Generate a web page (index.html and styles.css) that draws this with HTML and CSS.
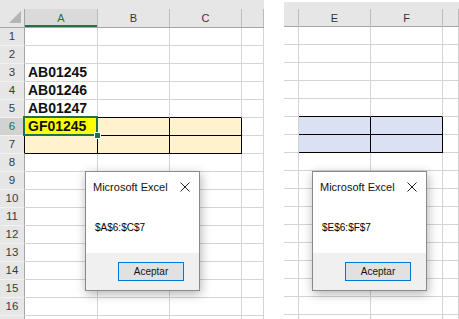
FILE: index.html
```html
<!DOCTYPE html>
<html lang="es">
<head>
    <meta charset="UTF-8">
    <title>Rango seleccionado</title>
    <link rel="stylesheet" href="styles.css">
</head>
<body>
    <div class="sheet sheet-left">
        <div class="row head">
            <span class="corner">
                <svg width="24" height="18" viewBox="0 0 24 18"><polygon points="21,4 21,16 9,16" fill="#b4b4b4"/></svg>
            </span>
            <span class="col-sel">A</span><span>B</span><span>C</span><span></span>
        </div>
        <div class="row"><span class="rh">1</span><span></span><span></span><span></span><span></span></div>
        <div class="row"><span class="rh">2</span><span></span><span></span><span></span><span></span></div>
        <div class="row"><span class="rh">3</span><span class="val">AB01245</span><span></span><span></span><span></span></div>
        <div class="row"><span class="rh">4</span><span class="val">AB01246</span><span></span><span></span><span></span></div>
        <div class="row"><span class="rh">5</span><span class="val above">AB01247</span><span class="above"></span><span class="above"></span><span></span></div>
        <div class="row"><span class="rh rh-sel boxed-left">6</span><span class="val cell-yellow active">GF01245</span><span class="peach"></span><span class="peach"></span><span></span></div>
        <div class="row"><span class="rh boxed-left">7</span><span class="peach"></span><span class="peach"></span><span class="peach"></span><span></span></div>
        <div class="row"><span class="rh">8</span><span></span><span></span><span></span><span></span></div>
        <div class="row"><span class="rh">9</span><span></span><span></span><span></span><span></span></div>
        <div class="row"><span class="rh">10</span><span></span><span></span><span></span><span></span></div>
        <div class="row"><span class="rh">11</span><span></span><span></span><span></span><span></span></div>
        <div class="row"><span class="rh">12</span><span></span><span></span><span></span><span></span></div>
        <div class="row"><span class="rh">13</span><span></span><span></span><span></span><span></span></div>
        <div class="row"><span class="rh">14</span><span></span><span></span><span></span><span></span></div>
        <div class="row"><span class="rh">15</span><span></span><span></span><span></span><span></span></div>
        <div class="row"><span class="rh">16</span><span></span><span></span><span></span><span></span></div>
        <div class="row"><span class="rh"></span><span></span><span></span><span></span><span></span></div>

        <div class="msgbox">
            <div class="msg-title">
                <span>Microsoft Excel</span>
                <svg width="10" height="10" viewBox="0 0 10 10"><path d="M0.5 0.5 L9.5 9.5 M9.5 0.5 L0.5 9.5" stroke="#222" stroke-width="1"/></svg>
            </div>
            <div class="msg-body">$A$6:$C$7</div>
            <div class="msg-foot"><button>Aceptar</button></div>
        </div>
    </div>

    <div class="sheet sheet-right">
        <div class="row head">
            <span></span><span>E</span><span>F</span><span></span>
        </div>
        <div class="row"><span class="rh"></span><span></span><span></span><span></span></div>
        <div class="row"><span class="rh"></span><span></span><span></span><span></span></div>
        <div class="row"><span class="rh"></span><span></span><span></span><span></span></div>
        <div class="row"><span class="rh"></span><span></span><span></span><span></span></div>
        <div class="row"><span class="rh"></span><span class="above"></span><span class="above"></span><span></span></div>
        <div class="row"><span class="rh boxed-left"></span><span class="blue"></span><span class="blue"></span><span></span></div>
        <div class="row"><span class="rh boxed-left"></span><span class="blue"></span><span class="blue"></span><span></span></div>
        <div class="row"><span class="rh"></span><span></span><span></span><span></span></div>
        <div class="row"><span class="rh"></span><span></span><span></span><span></span></div>
        <div class="row"><span class="rh"></span><span></span><span></span><span></span></div>
        <div class="row"><span class="rh"></span><span></span><span></span><span></span></div>
        <div class="row"><span class="rh"></span><span></span><span></span><span></span></div>
        <div class="row"><span class="rh"></span><span></span><span></span><span></span></div>
        <div class="row"><span class="rh"></span><span></span><span></span><span></span></div>
        <div class="row"><span class="rh"></span><span></span><span></span><span></span></div>
        <div class="row"><span class="rh"></span><span></span><span></span><span></span></div>
        <div class="row"><span class="rh"></span><span></span><span></span><span></span></div>

        <div class="msgbox">
            <div class="msg-title">
                <span>Microsoft Excel</span>
                <svg width="10" height="10" viewBox="0 0 10 10"><path d="M0.5 0.5 L9.5 9.5 M9.5 0.5 L0.5 9.5" stroke="#222" stroke-width="1"/></svg>
            </div>
            <div class="msg-body">$E$6:$F$7</div>
            <div class="msg-foot"><button>Aceptar</button></div>
        </div>
    </div>
</body>
</html>
```

FILE: styles.css
```css
/* Hoja y fondo */
body {
    margin: 0;
    width: 459px;
    height: 319px;
    overflow: hidden;
    background: #fff;
    display: flex;
    gap: 20px;
    font-family: "Liberation Sans", Arial, sans-serif;
    color: #333;
}

.sheet {
    position: relative;
    height: 319px;
    overflow: hidden;
}

.sheet-left {
    width: 264px;
}

.sheet-right {
    width: 175px;
    margin-top: 2px;
}

.row {
    display: grid;
    height: 18px;
}

.sheet-left .row {
    grid-template-columns: 25px 73px 72px 72px 22px;
}

.sheet-right .row {
    grid-template-columns: 15px 72px 72px 16px;
}

.row span {
    box-sizing: border-box;
    border-right: 1px solid #d4d4d4;
    border-bottom: 1px solid #d4d4d4;
    position: relative;
}

/* Cabecera de columnas */
.row.head {
    background: #e6e6e6;
    border-bottom: 1px solid #a5a5a5;
    box-sizing: content-box;
}

.sheet-left .row.head {
    height: 18px;
    padding-top: 9px;
}

.sheet-right .row.head {
    height: 17px;
    padding-top: 7px;
}

.row.head span {
    border-bottom: none;
    border-right-color: #bcbcbc;
    font-size: 11px;
    text-align: center;
    line-height: 18px;
    color: #333;
}

.row.head .corner {
    border-right-color: #a5a5a5;
}

.corner svg {
    display: block;
    margin-top: -2px;
}

.row.head .col-sel {
    background: #dadada;
    color: #217346;
    box-shadow: inset 0 -2px 0 #217346;
}

/* Cabecera de filas */
.rh {
    background: #e6e6e6;
    font-size: 11.5px;
    text-align: center;
    line-height: 17px;
    color: #3a3a3a;
}

.row .rh {
    border-right-color: #a5a5a5;
    border-bottom-color: #f2f2f2;
}

.sheet-right .rh {
    background: #fff;
}

.sheet-right .row .rh {
    border-right-color: #d4d4d4;
    border-bottom-color: #d4d4d4;
}

.row .rh-sel {
    background: #d2d2d2;
    color: #217346;
}

/* Celdas */
.val {
    font-size: 14px;
    font-weight: bold;
    line-height: 17px;
    padding-left: 3px;
    color: #111;
    white-space: nowrap;
}

.row .above {
    border-bottom-color: #000;
}

.row .boxed-left {
    border-right-color: #000;
}

.row .peach,
.row .cell-yellow,
.row .blue {
    border-right-color: #000;
    border-bottom-color: #000;
}

.peach {
    background: #fff2cc;
}

.cell-yellow {
    background: #ffff00;
}

.blue {
    background: #d9e1f2;
}

/* Celda activa */
.active::after {
    content: "";
    position: absolute;
    top: -2px;
    left: -2px;
    right: -1px;
    bottom: -1px;
    border: 2px solid #217346;
}

.active::before {
    content: "";
    position: absolute;
    right: -4px;
    bottom: -4px;
    width: 5px;
    height: 5px;
    background: #217346;
    border: 1px solid #fff;
    z-index: 2;
}

/* Cuadro de mensaje */
.msgbox {
    position: absolute;
    top: 171px;
    width: 113px;
    background: #fff;
    border: 1px solid #8a8a8a;
    box-shadow: 1px 3px 10px rgba(0, 0, 0, 0.3);
    display: flex;
    flex-direction: column;
    color: #111;
}

.sheet-left .msgbox {
    left: 85px;
}

.sheet-right .msgbox {
    top: 169px;
    left: 28px;
}

.msg-title {
    height: 30px;
    display: flex;
    align-items: center;
    justify-content: space-between;
    padding: 0 9px 0 7px;
    font-size: 11px;
}

.msg-body {
    height: 51px;
    display: flex;
    align-items: center;
    padding-left: 9px;
    font-size: 10px;
    color: #000;
}

.msg-foot {
    height: 37px;
    background: #f0f0f0;
    display: flex;
    align-items: center;
    justify-content: flex-end;
    padding-right: 15px;
}

.msg-foot button {
    width: 66px;
    height: 19px;
    padding: 0;
    background: #e1e1e1;
    border: 1px solid #0078d7;
    box-shadow: inset 0 0 0 1px #cfe3f5;
    font-family: "Liberation Sans", Arial, sans-serif;
    font-size: 10px;
    color: #111;
}
```
